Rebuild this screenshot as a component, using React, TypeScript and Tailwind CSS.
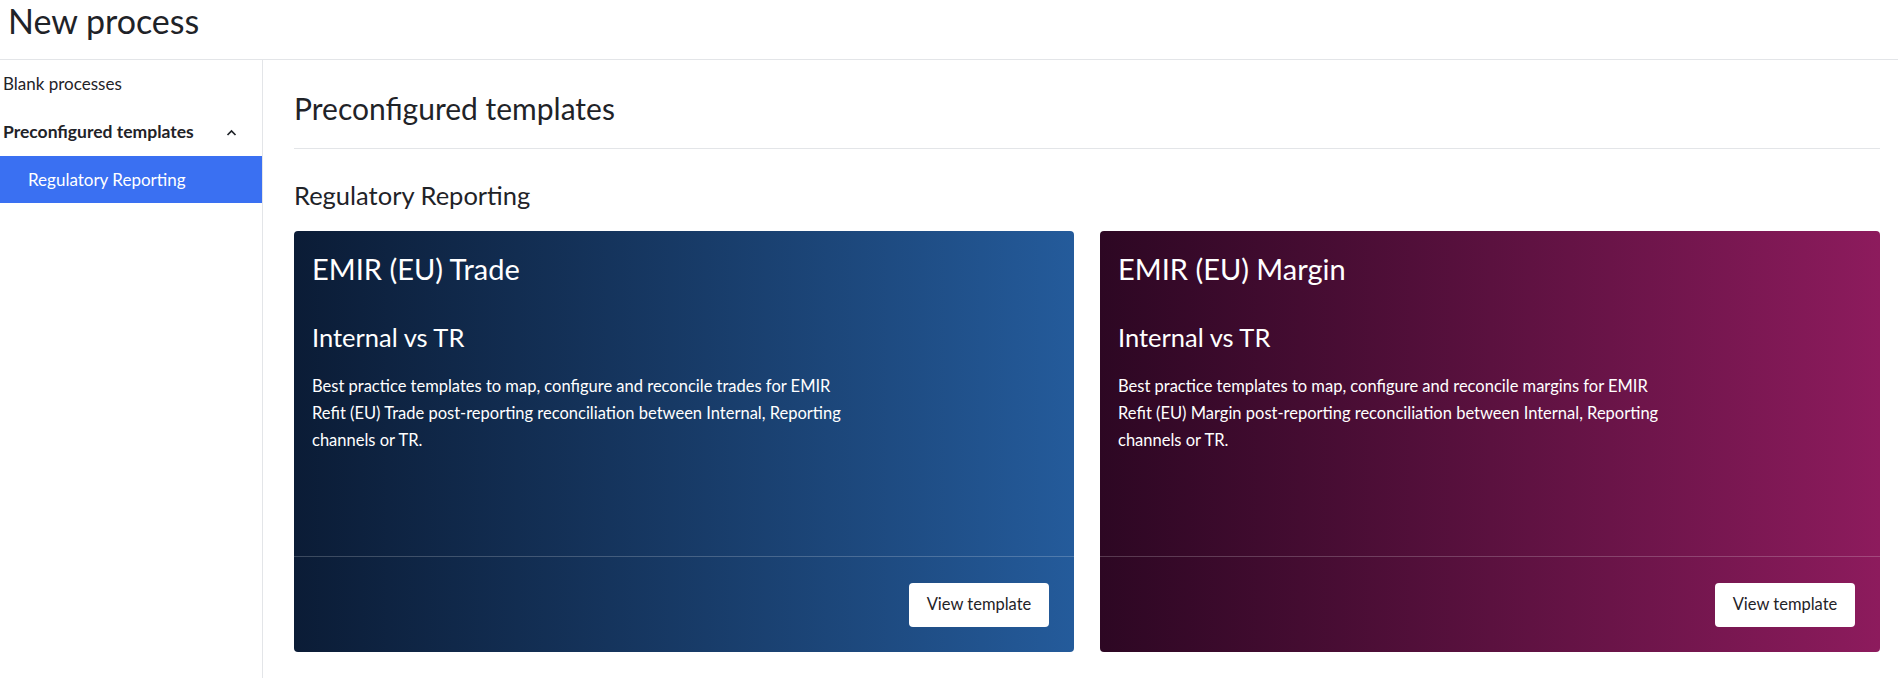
import React from "react";

const font = { fontFamily: "Lato, 'Open Sans', 'Noto Sans', sans-serif" };

function Card({ title, lines, gradient }: { title: string; lines: string[]; gradient: string }) {
  return (
    <div className={`flex flex-col rounded-[4px] text-white ${gradient}`}>
      <div className="flex-1 px-[18px] pt-[20px]">
        <div className="text-[29px] leading-[36px]">{title}</div>
        <div className="mt-[34px] text-[25.5px] leading-[32px]">Internal vs TR</div>
        <p className="mt-[20px] text-[16.5px] leading-[27px]">
          {lines.map((l, i) => (
            <React.Fragment key={i}>
              {l}
              {i < lines.length - 1 && <br />}
            </React.Fragment>
          ))}
        </p>
      </div>
      <div className="flex h-[96px] items-center justify-end border-t border-white/20 pr-[25px]">
        <button className="h-[44px] w-[140px] rounded-[4px] bg-white text-[16.5px] text-[#1f2328]">View template</button>
      </div>
    </div>
  );
}

export default function App() {
  return (
    <div className="flex h-[678px] w-[1898px] flex-col bg-white text-[#1f2328]" style={font}>
      <header className="flex h-[60px] items-start border-b border-[#e3e5e8] pl-[8px] pt-[1px]">
        <h1 className="text-[34px] leading-[40px]">New process</h1>
      </header>
      <div className="flex flex-1">
        <aside className="w-[263px] border-r border-[#e3e5e8]">
          <div className="flex h-[48px] items-center pl-[3px] text-[17px]">Blank processes</div>
          <div className="flex h-[48px] items-center justify-between pl-[3px] pr-[25px] text-[17.5px] font-bold">
            <span>Preconfigured templates</span>
            <svg width="11" height="7" viewBox="0 0 11 7" fill="none">
              <path d="M1.5 6L5.5 2L9.5 6" stroke="#1f2328" strokeWidth="1.7" />
            </svg>
          </div>
          <div className="flex h-[47px] items-center bg-[#3a70f2] pl-[28px] text-[17px] text-white">Regulatory Reporting</div>
        </aside>
        <main className="flex-1 pl-[31px] pr-[18px]">
          <h2 className="flex h-[89px] items-center border-b border-[#e3e5e8] pt-[8px] text-[30px]">Preconfigured templates</h2>
          <h3 className="flex h-[82px] items-center pt-[10px] text-[25.5px]">Regulatory Reporting</h3>
          <div className="grid h-[421px] grid-cols-2 gap-[26px]">
            <Card
              title="EMIR (EU) Trade"
              gradient="bg-gradient-to-r from-[#0b1c36] to-[#245b9b]"
              lines={[
                "Best practice templates to map, configure and reconcile trades for EMIR",
                "Refit (EU) Trade post-reporting reconciliation between Internal, Reporting",
                "channels or TR.",
              ]}
            />
            <Card
              title="EMIR (EU) Margin"
              gradient="bg-gradient-to-r from-[#2d0723] to-[#8d1b5d]"
              lines={[
                "Best practice templates to map, configure and reconcile margins for EMIR",
                "Refit (EU) Margin post-reporting reconciliation between Internal, Reporting",
                "channels or TR.",
              ]}
            />
          </div>
        </main>
      </div>
    </div>
  );
}
